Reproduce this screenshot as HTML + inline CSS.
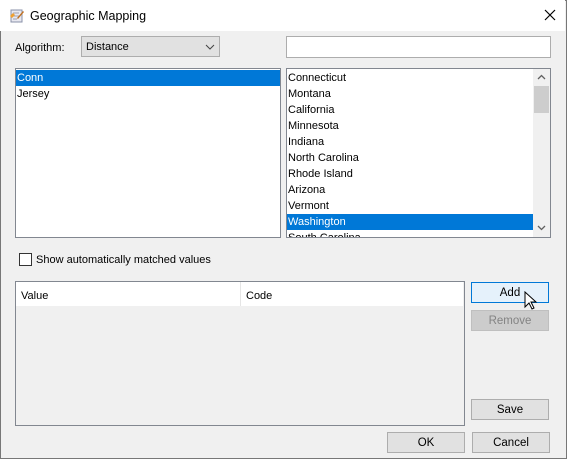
<!DOCTYPE html>
<html><head><style>
*{box-sizing:border-box;margin:0;padding:0}
body{width:567px;height:459px;background:#f0f0f0;font-family:"Liberation Sans",sans-serif;font-size:11px;color:#000;position:relative;overflow:hidden}
.win{position:absolute;left:0;top:0;width:567px;height:459px;border:1px solid #777;}
.title{position:absolute;left:0;top:0;width:565px;height:31px;background:#fff}
.a{position:absolute}
.btn{position:absolute;background:#e1e1e1;border:1px solid #adadad;text-align:center;line-height:20px;font-size:11.5px}
.list{position:absolute;background:#fff;border:1px solid #828790;padding-top:1px}
.row{height:16px;line-height:17px;padding-left:1px;font-size:11px;white-space:nowrap}
.sel{background:#0078d7;color:#fff}
</style></head><body>
<div class="win"></div>
<div class="title">
<svg class="a" style="left:9px;top:7px" width="16" height="16" viewBox="0 0 16 16"><rect x="2" y="3" width="11" height="12" fill="#e8e8f0" stroke="#8890a8"/><path d="M4 6h6M4 9h6M4 12h4" stroke="#a0a0b0"/><path d="M1 9l3-3 2 2-3 3z" fill="#f0a030"/><path d="M8 11l6-7 1 1-6 7z" fill="#c07020"/></svg>
<div class="a" style="left:30px;top:9px;font-size:12.5px">Geographic Mapping</div>
<svg class="a" style="left:544px;top:9px" width="12" height="12"><path d="M1 1L11 11M11 1L1 11" stroke="#000" stroke-width="1.2"/></svg>
</div>
<div class="a" style="left:15px;top:42px">Algorithm:</div>
<div class="a" style="left:81px;top:36px;width:139px;height:21px;background:#e1e1e1;border:1px solid #adadad;padding:4px 0 0 4px">Distance
<svg class="a" style="left:123px;top:7px" width="10" height="6"><path d="M1 1l4 4 4-4" stroke="#444" fill="none"/></svg></div>
<div class="a" style="left:286px;top:36px;width:265px;height:22px;background:#fff;border:1px solid #adadad"></div>
<div class="list" style="left:15px;top:68px;width:266px;height:170px">
<div class="row sel">Conn</div><div class="row">Jersey</div></div>
<div class="list" style="left:286px;top:68px;width:265px;height:170px;overflow:hidden">
<div class="row">Connecticut</div><div class="row">Montana</div><div class="row">California</div><div class="row">Minnesota</div><div class="row">Indiana</div><div class="row">North Carolina</div><div class="row">Rhode Island</div><div class="row">Arizona</div><div class="row">Vermont</div><div class="row sel" style="width:246px">Washington</div><div class="row">South Carolina</div>
<div class="a" style="left:246px;top:0;width:17px;height:168px;background:#f0f0f0"></div>
<div class="a" style="left:247px;top:17px;width:15px;height:27px;background:#cdcdcd"></div>
<svg class="a" style="left:250px;top:5px" width="9" height="6"><path d="M1 5l3.5-3.5L8 5" stroke="#606060" fill="none" stroke-width="1.3"/></svg>
<svg class="a" style="left:250px;top:156px" width="9" height="6"><path d="M1 1l3.5 3.5L8 1" stroke="#606060" fill="none" stroke-width="1.3"/></svg>
</div>
<div class="a" style="left:19px;top:253px;width:13px;height:13px;border:1px solid #333;background:#fff"></div>
<div class="a" style="left:36px;top:254px">Show automatically matched values</div>
<div class="a" style="left:15px;top:281px;width:450px;height:145px;border:1px solid #828790;background:#f0f0f0">
<div class="a" style="left:0;top:0;width:447px;height:24px;background:#fff"></div>
<div class="a" style="left:224px;top:0;width:1px;height:24px;background:#e5e5e5"></div>
<div class="a" style="left:5px;top:8px">Value</div>
<div class="a" style="left:230px;top:8px">Code</div>
</div>
<div class="btn" style="left:471px;top:282px;width:78px;height:21px;background:#e5f1fb;border-color:#0078d7">Add</div>
<svg class="a" style="left:524px;top:291px" width="14" height="22"><path d="M1 1v15l4-4 3 6 2-1-3-6h5z" fill="#fff" stroke="#000" stroke-width="1"/></svg>
<div class="btn" style="left:471px;top:310px;width:78px;height:21px;background:#cccccc;border-color:#bfbfbf;color:#838383">Remove</div>
<div class="btn" style="left:471px;top:399px;width:78px;height:21px">Save</div>
<div class="btn" style="left:387px;top:432px;width:78px;height:21px">OK</div>
<div class="btn" style="left:472px;top:432px;width:78px;height:21px">Cancel</div>
</body></html>
